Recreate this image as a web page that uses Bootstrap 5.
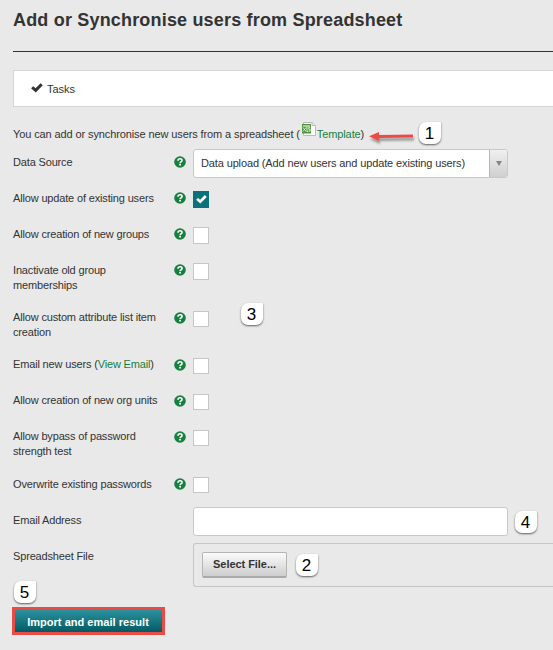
<!DOCTYPE html>
<html lang="en">
<head>
<meta charset="utf-8">
<meta name="viewport" content="width=device-width, initial-scale=1">
<title>Add or Synchronise users from Spreadsheet</title>
<link href="https://cdn.jsdelivr.net/npm/bootstrap@5.3.0/dist/css/bootstrap.min.css" rel="stylesheet">
<style>
body{background:#e9e9e9;color:#333;font:11px/15px "Liberation Sans",Arial,sans-serif;letter-spacing:-.16px}
.page{padding-left:13px;height:650px}
.page-title{font-size:18px;line-height:24px;font-weight:700;height:51px;letter-spacing:.18px}
.rule{height:1px;background:#333}
.tasks{height:37px;border:1px solid #d6d6d6;border-right:0;background:#fff;padding-left:17px;margin-top:18px}
.tasks svg{margin-bottom:2px}
.tasklabel{padding-top:1px;letter-spacing:0}
.intro{height:38px;padding-top:20px;letter-spacing:-.11px}
.sheet{margin:-5px 1px 0 1px}
.green{color:#17803d;text-decoration:none}
.frow{height:36px}
.frow.two{height:47px}
.frow.tall{height:48px}
.lab{width:161px;padding-top:10px;white-space:nowrap}
.help{width:12px;height:12px;margin-top:11px;margin-right:7px}
.low .help{margin-top:12px}
.chk{width:16px;height:17px;border:1px solid #c6c6c6;background:#fff;margin-top:10px}
.low .chk{margin-top:11px;height:16px}
.chk.on{background:#0b717b;border-color:#0b717b}
.last .chk{height:16px}
.field{width:315px;height:29px;border:1px solid #c9c9c9;border-radius:3px;background:#fff;margin-top:4px}
.seltext{padding:6px 0 0 7px;white-space:nowrap;letter-spacing:-.13px}
.drop{width:18px;border-left:1px solid #b5b5b5;background:linear-gradient(#f0f0f0,#cfcfcf)}
.filebox{height:44px;border:1px solid #c6c6c6;border-right:0;border-radius:3px 0 0 3px;margin-top:4px;padding:8px}
.pick{width:85px;height:26px;border:1px solid #b5b5b5;border-bottom:2px solid #aaa;border-radius:2px;background:linear-gradient(#fbfbfb,#cecece);font-size:11px;line-height:23px;font-weight:700;letter-spacing:-.05px;color:#333;padding:0}
.go{width:153px;height:28px;margin:21px 0 0 -1px;border:3px solid #e94b45;border-radius:0;background:linear-gradient(#2b929e,#045a63);color:#fff;font-size:11px;line-height:22px;font-weight:700;letter-spacing:.03px;padding:1px 1px 0 0}
.note{position:absolute;width:22px;height:22px;border-radius:7px 1px 7px 7px;background:#fff;box-shadow:0 1px 2px 0 rgba(0,0,0,.6);color:#000;font-size:17px;line-height:23px;text-align:center;padding-right:1px}
.n1{left:419px;top:122px}
.n2{left:296px;top:554px}
.n3{left:241px;top:303px}
.n4{left:515px;top:511px}
.n5{left:14px;top:581px}
.arrow{position:absolute;left:366px;top:126px}
</style>
</head>
<body>
<svg class="d-none">
<symbol id="q" viewBox="0 0 12 12"><circle cx="6" cy="6" r="5.8" fill="#16803f"/><path d="M4 4.8Q4 2.8 6.1 2.8Q8 2.8 8 4.4Q8 5.3 7.1 5.8Q6.1 6.3 6.1 7.2" fill="none" stroke="#fff" stroke-width="1.6"/><path d="M5.2 8h1.8v1.6H5.2z" fill="#fff"/></symbol>
<symbol id="tick" viewBox="0 0 11 9"><path d="M.1 4.7 2 2.9 4.2 4.8 8.8.1 10.8 2 4.3 8.6Z" fill="currentColor"/></symbol>
</svg>
<main class="page position-relative overflow-hidden">
<h1 class="page-title mb-0 pt-2">Add or Synchronise users from Spreadsheet</h1>
<div class="rule"></div>
<div class="tasks d-flex align-items-center"><svg class="me-1" width="12" height="10"><use href="#tick"/></svg><span class="tasklabel">Tasks</span></div>
<div class="intro d-flex text-nowrap"><span>You can add or synchronise new users from a spreadsheet (</span><svg class="flex-shrink-0 sheet" width="15" height="15" viewBox="0 0 15 15"><path d="M2.5.5h9l3 3v10h-12z" fill="#fff" stroke="#bbb"/><path d="M11 .5v3h3.5" fill="#eee" stroke="#bbb"/><path d="M1 2h9v9.5H1z" fill="#4f9640"/><path d="M2 3h7v2H2z" fill="#a8cf98"/><path d="m2 5.5 3 4m0-4-3 4M6 5v4.5h1.2M9.3 5.4H7.8V7.2h1.3v2H7.7" stroke="#e8f4e1" fill="none" stroke-width=".9"/></svg><a href="#" class="green">Template</a><span>)</span></div>
<form>
<div class="frow d-flex"><label class="lab">Data Source</label><svg class="help"><use href="#q"/></svg><div class="field d-flex overflow-hidden"><span class="seltext flex-grow-1">Data upload (Add new users and update existing users)</span><span class="drop d-flex align-items-center justify-content-center"><svg width="6" height="5"><path d="M0 0h6L3 5z" fill="#858585"/></svg></span></div></div>
<div class="frow d-flex"><label class="lab">Allow update of existing users</label><svg class="help"><use href="#q"/></svg><span class="chk on d-flex align-items-center justify-content-center text-white"><svg class="flex-shrink-0" width="11" height="9"><use href="#tick"/></svg></span></div>
<div class="frow d-flex"><label class="lab">Allow creation of new groups</label><svg class="help"><use href="#q"/></svg><span class="chk"></span></div>
<div class="frow two d-flex"><label class="lab">Inactivate old group<br>memberships</label><svg class="help"><use href="#q"/></svg><span class="chk"></span></div>
<div class="frow two low d-flex"><label class="lab">Allow custom attribute list item<br>creation</label><svg class="help"><use href="#q"/></svg><span class="chk"></span></div>
<div class="frow low d-flex"><label class="lab">Email new users (<a href="#" class="green">View Email</a>)</label><svg class="help"><use href="#q"/></svg><span class="chk"></span></div>
<div class="frow low d-flex"><label class="lab">Allow creation of new org units</label><svg class="help"><use href="#q"/></svg><span class="chk"></span></div>
<div class="frow tall low d-flex"><label class="lab">Allow bypass of password<br>strength test</label><svg class="help"><use href="#q"/></svg><span class="chk"></span></div>
<div class="frow last d-flex"><label class="lab">Overwrite existing passwords</label><svg class="help"><use href="#q"/></svg><span class="chk"></span></div>
<div class="frow d-flex"><label class="lab">Email Address</label><span class="help"></span><div class="field"></div></div>
<div class="frow two d-flex"><label class="lab">Spreadsheet File</label><span class="help"></span><div class="filebox flex-grow-1"><button type="button" class="btn pick d-block">Select File...</button></div></div>
<button type="button" class="btn go d-block">Import and email result</button>
</form>
<svg class="arrow" width="50" height="22"><defs><filter id="sh" x="-10%" y="-30%" width="120%" height="190%"><feDropShadow dx="1" dy="3" stdDeviation="1.2" flood-opacity=".35"/></filter></defs><path d="M3 10.3 13 6v3l34-.5v3l-34 .5V15Z" fill="#ec4b45" filter="url(#sh)"/></svg>
<span class="note n1">1</span>
<span class="note n2">2</span>
<span class="note n3">3</span>
<span class="note n4">4</span>
<span class="note n5">5</span>
</main>
<script src="https://cdn.jsdelivr.net/npm/bootstrap@5.3.0/dist/js/bootstrap.bundle.min.js"></script>
</body>
</html>
